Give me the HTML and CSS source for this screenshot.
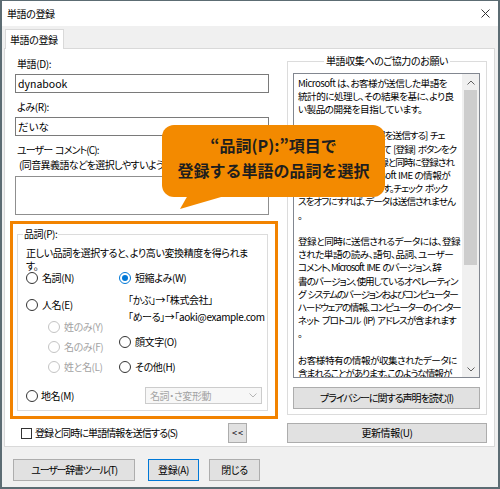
FILE: index.html
```html
<!DOCTYPE html>
<html lang="ja">
<head>
<meta charset="utf-8">
<title>単語の登録</title>
<link rel="stylesheet" href="styles.css">
</head>
<body>
<div class="window">
  <div class="titlebar">
    <span class="title">単語の登録</span>
    <svg class="close" width="9" height="9" viewBox="0 0 9 9"><path d="M0.5 0.5 L8.5 8.5 M8.5 0.5 L0.5 8.5" stroke="#333" stroke-width="1" fill="none"/></svg>
  </div>
  <div class="client">
    <div class="tabs"><div class="tab">単語の登録</div></div>
    <div class="panel">
      <div class="col-left">
        <div class="label">単語(D):</div>
        <div class="input">dynabook</div>
        <div class="label gap">よみ(R):</div>
        <div class="input">だいな</div>
        <div class="label gap kana">ユーザー コメント(C):</div>
        <div class="hint">(同音異義語などを選択しやすいようにするためのコメント)</div>
        <div class="textarea"></div>
        <fieldset class="group pos">
          <legend>品詞(P):</legend>
          <div class="desc">正しい品詞を選択すると、より高い変換精度を得られま<br>す。</div>
          <div class="radios">
            <div class="rcol rleft">
              <div class="radio-row"><span class="radio"></span>名詞(N)</div>
              <div class="radio-row m13"><span class="radio"></span>人名(E)</div>
              <div class="radio-row sub m8 disabled"><span class="radio"></span>姓のみ(Y)</div>
              <div class="radio-row sub m6 disabled"><span class="radio"></span>名のみ(F)</div>
              <div class="radio-row sub m6 disabled"><span class="radio"></span>姓と名(L)</div>
            </div>
            <div class="rcol rright">
              <div class="radio-row"><span class="radio checked"></span>短縮よみ(W)</div>
              <div class="example m8">「かぶ」→「株式会社」</div>
              <div class="example m3">「めーる」→「aoki@example.com</div>
              <div class="radio-row m11"><span class="radio"></span>顔文字(O)</div>
              <div class="radio-row m11"><span class="radio"></span>その他(H)</div>
            </div>
          </div>
          <div class="lastrow">
            <div class="radio-row place"><span class="radio"></span>地名(M)</div>
            <div class="combo">
              <span>名詞・さ変形動</span>
              <svg width="8" height="5" viewBox="0 0 8 5"><polyline points="0.5,0.5 4,4 7.5,0.5" fill="none" stroke="#b5b5b5" stroke-width="1"/></svg>
            </div>
          </div>
        </fieldset>
        <div class="sendrow">
          <span class="checkbox"></span>
          <span class="send-label">登録と同時に単語情報を送信する(S)</span>
          <div class="btn collapse">&lt;&lt;</div>
        </div>
      </div>
      <div class="col-right">
        <fieldset class="group collect">
          <legend>単語収集へのご協力のお願い</legend>
          <div class="memo">
            <div class="memo-text">
              <div>Microsoft は、お客様が送信した単語を</div>
              <div>統計的に処理し、その結果を基に、より良</div>
              <div>い製品の開発を目指しています。</div>
              <div>&nbsp;</div>
              <div class="tight">[登録と同時に単語情報を送信する] チェ</div>
              <div class="tight">ック ボックスをオンにして [登録] ボタンをク</div>
              <div class="tight">リックすると、単語の登録と同時に登録され</div>
              <div>たデータおよび Microsoft IME の情報が</div>
              <div class="tight">Microsoft に送信されます。チェック ボック</div>
              <div class="tight">スをオフにすれば、データは送信されません</div>
              <div>。</div>
              <div>&nbsp;</div>
              <div>登録と同時に送信されるデータには、登録</div>
              <div>された単語の読み、語句、品詞、ユーザー</div>
              <div class="tight">コメント、Microsoft IME のバージョン、辞</div>
              <div class="tight">書のバージョン、使用しているオペレーティン</div>
              <div class="tighter">グ システムのバージョンおよびコンピューター</div>
              <div class="tighter">ハードウェアの情報、コンピューターのインター</div>
              <div class="tight">ネット プロトコル (IP) アドレスが含まれます</div>
              <div>。</div>
              <div>&nbsp;</div>
              <div>お客様特有の情報が収集されたデータに</div>
              <div class="tight">含まれることがあります。このような情報が</div>
            </div>
            <div class="scrollbar">
              <div class="sb-arrow"><svg width="8" height="5" viewBox="0 0 8 5"><polyline points="0.5,4.5 4,1 7.5,4.5" fill="none" stroke="#606060" stroke-width="1"/></svg></div>
              <div class="sb-track"><div class="sb-thumb"></div></div>
              <div class="sb-arrow"><svg width="8" height="5" viewBox="0 0 8 5"><polyline points="0.5,0.5 4,4 7.5,0.5" fill="none" stroke="#606060" stroke-width="1"/></svg></div>
            </div>
          </div>
          <div class="btn privacy">プライバシーに関する声明を読む(I)</div>
        </fieldset>
        <div class="btn update">更新情報(U)</div>
      </div>
      <div class="highlight"></div>
      <div class="callout">
        <div class="callout-text">“品詞(P):”項目で<br>登録する単語の品詞を選択</div>
        <svg class="tail" width="70" height="16" viewBox="0 0 70 16"><polygon points="26,0 18,14 66,0" fill="#f38a00"/></svg>
      </div>
    </div>
    <div class="footer">
      <div class="btn dict">ユーザー辞書ツール(T)</div>
      <div class="btn default">登録(A)</div>
      <div class="btn close-btn">閉じる</div>
    </div>
  </div>
</div>
</body>
</html>
```
FILE: styles.css
```css
* { box-sizing: border-box; }
html, body { margin: 0; padding: 0; }
body {
  width: 500px;
  height: 489px;
  overflow: hidden;
  font-family: "Noto Sans CJK JP", sans-serif;
  font-size: 10px;
  line-height: 14px;
  letter-spacing: -0.4px;
  color: #000;
  font-feature-settings: "palt";
  background: #fff;
}
.window {
  width: 500px;
  height: 489px;
  border: 2px solid #5c6c73;
  border-top-width: 1px;
  display: flex;
  flex-direction: column;
  background: #f0f0f0;
}
.titlebar {
  height: 25px;
  flex: none;
  background: #fff;
  display: flex;
  align-items: center;
  justify-content: space-between;
  padding: 0 8px 0 5px;
}
.client {
  flex: 1;
  display: flex;
  flex-direction: column;
  padding-top: 3px;
}
.tabs {
  display: flex;
  padding-left: 3px;
  height: 19px;
  position: relative;
  z-index: 1;
}
.tab {
  height: 20px;
  background: #fff;
  border: 1px solid #d9d9d9;
  border-bottom: none;
  padding: 0 5px 0 4px;
  line-height: 19px;
  white-space: nowrap;
}
.panel {
  margin-left: 2px;
  width: 491px;
  height: 399px;
  flex: none;
  border: 1px solid #d9d9d9;
  background: #fff;
  display: flex;
  position: relative;
}
.col-left {
  width: 254px;
  margin-left: 10px;
  padding-top: 8px;
  display: flex;
  flex-direction: column;
}
.label { padding-left: 2px; margin-bottom: 3px; white-space: nowrap; }
.label.gap { margin-top: 7px; }
.kana { letter-spacing: -0.9px; word-spacing: 1.5px; }
.input {
  height: 19px;
  border: 1px solid #7a7a7a;
  padding-left: 2px;
  font-size: 10.5px;
  line-height: 17px;
  letter-spacing: 0;
}
.hint {
  margin-top: -2px;
  padding-left: 4px;
  white-space: nowrap;
  overflow: hidden;
  letter-spacing: -0.6px;
}
.textarea {
  margin-top: 4px;
  height: 39px;
  border: 1px solid #8f8f8f;
}
.group {
  margin: 0;
  border: 1px solid #dcdcdc;
  min-width: 0;
}
.group legend {
  padding: 0 1px;
  line-height: 14px;
  white-space: nowrap;
}
.pos {
  margin: 12px 1px 0 2px;
  padding: 0 0 6px 0;
}
.pos legend { margin-left: 5px; }
.desc {
  margin-top: 5px;
  padding-left: 8px;
  line-height: 13px;
  white-space: nowrap;
}
.radios {
  display: flex;
  margin-top: -1px;
  padding-left: 8px;
}
.rleft { width: 93px; display: flex; flex-direction: column; }
.rright { display: flex; flex-direction: column; }
.radio-row {
  display: flex;
  align-items: center;
  gap: 4px;
  height: 14px;
  white-space: nowrap;
}
.radio {
  width: 12px;
  height: 12px;
  border: 1px solid #333;
  border-radius: 50%;
  background: #fff;
  flex: none;
  display: flex;
  align-items: center;
  justify-content: center;
}
.radio.checked { border-color: #0078d7; }
.radio.checked::after {
  content: "";
  width: 6px;
  height: 6px;
  border-radius: 50%;
  background: #0078d7;
}
.disabled { color: #a3a3a3; }
.disabled .radio { border-color: #c4c4c4; }
.sub { padding-left: 22px; }
.m3 { margin-top: 3px; }
.m6 { margin-top: 6px; }
.m8 { margin-top: 8px; }
.m11 { margin-top: 11px; }
.m13 { margin-top: 13px; }
.example { padding-left: 9px; white-space: nowrap; height: 14px; }
.lastrow {
  display: flex;
  align-items: center;
  margin-top: 13px;
  padding-left: 8px;
  height: 17px;
}
.place { width: 119px; gap: 3px; }
.combo {
  width: 117px;
  height: 17px;
  border: 1px solid #cccccc;
  background: #f7f7f7;
  color: #a3a3a3;
  display: flex;
  align-items: center;
  justify-content: space-between;
  padding: 0 4px 0 4px;
}
.sendrow {
  margin-top: 12px;
  height: 20px;
  display: flex;
  align-items: center;
  padding-left: 6px;
}
.checkbox {
  width: 11px;
  height: 11px;
  border: 1px solid #333;
  background: #fff;
  flex: none;
}
.send-label { margin-left: 3px; white-space: nowrap; letter-spacing: -0.9px; }
.btn {
  background: #e1e1e1;
  border: 1px solid #adadad;
  display: flex;
  align-items: center;
  justify-content: center;
  white-space: nowrap;
}
.collapse {
  width: 19px;
  height: 20px;
  margin-left: auto;
  margin-right: 22px;
  font-size: 9px;
  letter-spacing: 1px;
  padding-left: 1px;
}
.col-right {
  width: 200px;
  margin-left: 18px;
  padding-top: 5px;
  display: flex;
  flex-direction: column;
}
.collect { padding: 0 0 5px 0; }
.collect legend { margin: 0 auto; padding: 0 2px; }
.memo {
  margin: 5px 0 0 5px;
  width: 187px;
  height: 305px;
  border: 1px solid #828790;
  display: flex;
  background: #fff;
}
.memo-text {
  flex: 1;
  overflow: hidden;
  padding: 2.5px 0 0 4px;
  font-size: 9.6px;
  line-height: 13.2px;
  letter-spacing: -0.5px;
  white-space: nowrap;
}
.memo-text .tight { letter-spacing: -1px; word-spacing: 1.5px; }
.memo-text .tighter { letter-spacing: -1.3px; word-spacing: 1px; }
.scrollbar {
  width: 17px;
  flex: none;
  background: #f0f0f0;
  display: flex;
  flex-direction: column;
}
.sb-arrow {
  height: 16px;
  display: flex;
  align-items: center;
  justify-content: center;
}
.sb-track { flex: 1; }
.sb-thumb {
  height: 175px;
  margin: 0 2px;
  background: #cdcdcd;
}
.privacy {
  margin: 9px 0 0 5px;
  width: 187px;
  height: 22px;
  letter-spacing: -1px;
}
.update {
  margin-top: 8px;
  height: 20px;
}
.highlight {
  position: absolute;
  left: 5px;
  top: 172px;
  width: 268px;
  height: 198px;
  border: 3px solid #f28300;
}
.callout {
  position: absolute;
  left: 157px;
  top: 76px;
  width: 223px;
  height: 72px;
  border-radius: 12px;
  background: #f38a00;
}
.callout-text {
  padding-top: 8px;
  text-align: center;
  font-size: 16px;
  font-weight: bold;
  line-height: 25px;
  letter-spacing: 0;
  color: #1e1e1e;
  font-feature-settings: normal;
}
.tail {
  position: absolute;
  left: 0;
  top: 70px;
}
.footer {
  display: flex;
  padding: 12px 0 0 11px;
}
.footer .btn { height: 22px; }
.dict { width: 122px; letter-spacing: -1.2px; }
.default { width: 51px; margin-left: 13px; border-color: #0078d7; }
.close-btn { width: 51px; margin-left: 10px; }
```
